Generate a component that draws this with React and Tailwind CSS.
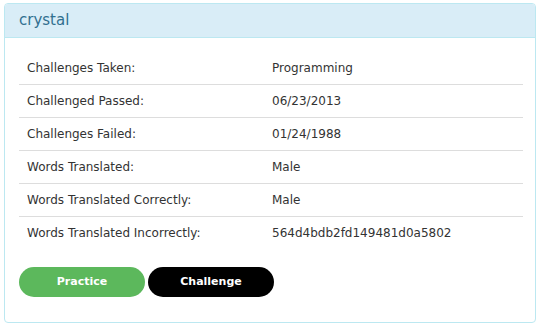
const stats = [
  { label: "Challenges Taken:", value: "Programming" },
  { label: "Challenged Passed:", value: "06/23/2013" },
  { label: "Challenges Failed:", value: "01/24/1988" },
  { label: "Words Translated:", value: "Male" },
  { label: "Words Translated Correctly:", value: "Male" },
  { label: "Words Translated Incorrectly:", value: "564d4bdb2fd149481d0a5802" },
];

export default function App() {
  return (
    <div
      className="pl-[4px] pt-[3px] bg-white text-[#333]"
      style={{ fontFamily: '"DejaVu Sans", Verdana, sans-serif' }}
    >
      <div className="w-[532px] rounded-[4px] border border-[#bce8f1] bg-white">
        <div className="h-[34px] flex items-center px-[14px] bg-[#d9edf7] border-b border-[#bce8f1] rounded-t-[3px] text-[#31708f] text-[15px]">
          crystal
        </div>

        <div className="pl-[14px] pr-[12px] pt-[13px] pb-[25px]">
          <table className="w-[504px] text-[12px] leading-[16px]">
            <tbody>
              {stats.map((row, i) => (
                <tr key={row.label}>
                  <td
                    className={`w-[245px] px-[8px] py-[8px] border-t ${
                      i === 0 ? "border-transparent" : "border-[#ddd]"
                    }`}
                  >
                    {row.label}
                  </td>
                  <td
                    className={`px-[8px] py-[8px] border-t ${
                      i === 0 ? "border-transparent" : "border-[#ddd]"
                    }`}
                  >
                    {row.value}
                  </td>
                </tr>
              ))}
            </tbody>
          </table>

          <div className="mt-[18px] flex gap-[3px]">
            <button className="w-[126px] h-[30px] rounded-full bg-[#5cb85c] text-white text-[11px] font-bold">
              Practice
            </button>
            <button className="w-[126px] h-[30px] rounded-full bg-black text-white text-[11px] font-bold">
              Challenge
            </button>
          </div>
        </div>
      </div>
    </div>
  );
}
